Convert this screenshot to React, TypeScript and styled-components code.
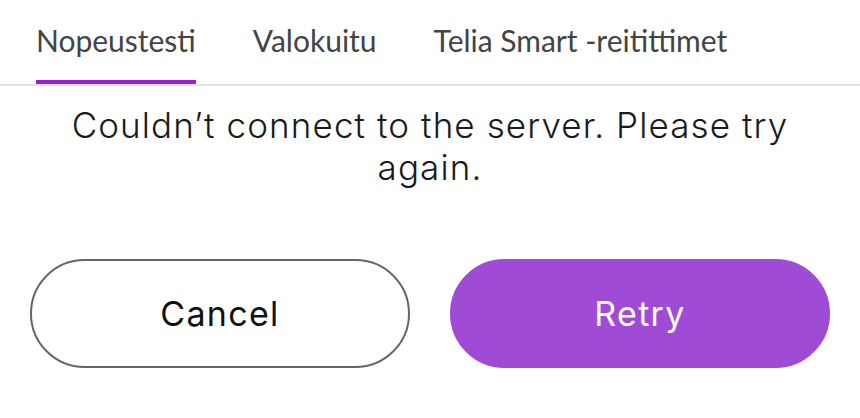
import React from 'react';
import styled, { createGlobalStyle } from 'styled-components';

const GlobalStyle = createGlobalStyle`
  html, body {
    margin: 0;
    padding: 0;
    background: #ffffff;
  }
  body {
    font-family: Inter, "Noto Sans", sans-serif;
  }
`;

const tabs = ['Nopeustesti', 'Valokuitu', 'Telia Smart -reitittimet'];

const Page = styled.div`
  width: 860px;
  height: 418px;
  display: flex;
  flex-direction: column;
`;

const TabBar = styled.nav`
  display: flex;
  gap: 57px;
  height: 84px;
  padding: 0 36px;
  border-bottom: 2px solid #e2e2e2;
`;

const Tab = styled.div<{ $active?: boolean }>`
  display: flex;
  align-items: flex-start;
  padding-top: 22px;
  box-sizing: border-box;
  height: 84px;
  font-family: Lato, "Noto Sans", sans-serif;
  font-size: 30px;
  line-height: 36px;
  color: #444444;
  border-bottom: 4px solid ${(p) => (p.$active ? '#9a1ed9' : 'transparent')};
`;

const Message = styled.p`
  margin: 18px 50px 0;
  text-align: center;
  font-family: Inter, "Noto Sans", sans-serif;
  font-weight: 300;
  font-size: 35px;
  line-height: 42px;
  letter-spacing: 1.1px;
  color: #1a1a1a;
`;

const Actions = styled.div`
  display: grid;
  grid-template-columns: 380px 380px;
  gap: 40px;
  padding: 0 30px;
  margin-top: 71px;
`;

const Button = styled.button<{ $primary?: boolean }>`
  height: 109px;
  border-radius: 55px;
  box-sizing: border-box;
  font-family: Inter, "Noto Sans", sans-serif;
  font-size: 34px;
  font-weight: 400;
  letter-spacing: 1.3px;
  cursor: pointer;
  border: 2px solid ${(p) => (p.$primary ? '#a04bd6' : '#666666')};
  background: ${(p) => (p.$primary ? '#a04bd6' : '#ffffff')};
  color: ${(p) => (p.$primary ? '#ffffff' : '#111111')};
`;

export default function App() {
  return (
    <Page>
      <GlobalStyle />
      <TabBar>
        {tabs.map((t, i) => (
          <Tab key={t} $active={i === 0}>
            {t}
          </Tab>
        ))}
      </TabBar>
      <Message>Couldn’t connect to the server. Please try again.</Message>
      <Actions>
        <Button>Cancel</Button>
        <Button $primary>Retry</Button>
      </Actions>
    </Page>
  );
}
